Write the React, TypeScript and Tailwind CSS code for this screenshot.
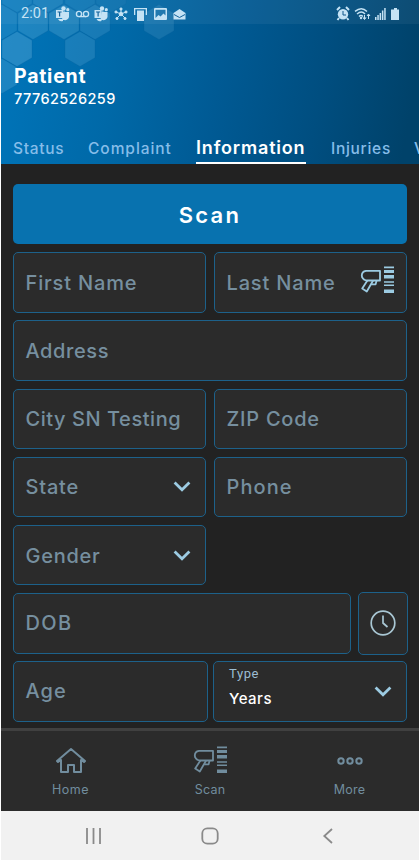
import type { ReactNode } from 'react';

function Scanner({ className }: { className?: string }) {
  return (
    <svg className={className} width="34" height="28" viewBox="0 0 34 28" fill="none" stroke="currentColor" strokeWidth="1.8" strokeLinejoin="round">
      <path d="M6 4.8H20v9.7H6.3C3 13.6 1.8 12 1.8 9.6S3.2 5.2 6 4.8Z" />
      <path d="M7.4 14.5 2.2 22.6l4.6 2.9 6.3-11M11.2 18.4h4.4l1-3.9" />
      <g fill="currentColor" stroke="none">
        <path d="M24 .6h10v1.6H24zM24 4h10v3H24zM24 9h10v3.6H24zM24 15.2h10v1.6H24zM24 18.4h10V20H24zM24 23.4h10V27H24z" />
      </g>
    </svg>
  );
}

function Chevron() {
  return (
    <svg width="18" height="12" viewBox="0 0 18 12" fill="none" stroke="#9ccbe2" strokeWidth="2.8">
      <path d="m1.6 1.6 7.4 7.2 7.4-7.2" />
    </svg>
  );
}

function Field({ children, className = 'w-[193px]' }: { children: ReactNode; className?: string }) {
  return (
    <div className={`flex h-[60.4px] shrink-0 items-center justify-between rounded-[5px] border border-[#1d618a] bg-[#2b2b2b] pl-[11.5px] pt-px text-[20px] font-medium text-[#768f9f] ${className}`}>
      {children}
    </div>
  );
}

// Hexagon centres and opacities
const hexes = [
  [17, -5, 0.1], [48, -5, 0.12], [80, -5, 0.08], [111, -5, 0.05],
  [2, 22, 0.12], [33, 22, 0.18], [64, 22, 0.18], [95, 22, 0.14], [159, 22, 0.12],
  [17, 49, 0.22], [80, 49, 0.15], [2, 76, 0.17],
];

function StatusBar() {
  return (
    <div className="flex h-6 items-center bg-white/5 pl-5 pt-1 text-[#c5e3f5]">
      <span className="w-[34px] font-[Roboto] text-[14.5px] leading-5 tracking-[0.1px]">2:01</span>
      <svg width="132" height="16" viewBox="0 0 132 16" fill="currentColor">
        <g id="teams">
          <path d="M1 4h7v8H1zM9 6h5v5a4 4 0 0 1-5 3zM3 13h5v2a4 4 0 0 1-5-2z" />
          <path d="M8 5.5h2v8.5H7z" />
          <circle cx="8.5" cy="2.5" r="2.2" /><circle cx="12.8" cy="3.7" r="1.6" />
          <path d="M2.6 6h4M4.6 6v4.4" stroke="#12629b" strokeWidth="1.2" />
        </g>
        <g fill="none" stroke="currentColor" strokeWidth="1.3"><circle cx="24" cy="8" r="2.6" /><circle cx="31" cy="8" r="2.6" /><path d="M24 10.6h7" /></g>
        <use href="#teams" x="38.5" />
        <g stroke="currentColor" strokeWidth="1"><path d="M66 8V3M66 8l5-2M66 8l4 4M66 8l-4 4M66 8l-5-2" />
          <circle cx="66" cy="8" r="1.8" /><circle cx="66" cy="3" r="1.1" /><circle cx="71" cy="6" r="1.1" /><circle cx="70" cy="12.5" r="1.1" /><circle cx="62" cy="12.5" r="1.1" /><circle cx="61" cy="6" r="1.1" /></g>
        <path d="M79 2h13v7h-1.3V3.3h-10.400V9H79zM82 4.500h7V15h-7z" />
        <path fillRule="evenodd" d="M100 2h11a1 1 0 0 1 1 1v10a1 1 0 0 1-1 1h-11a1 1 0 0 1-1-1V3a1 1 0 0 1 1-1Zm.5 1.800V12l3-3 2 1.500 3-3 2 2V3.800Z" />
        <path d="m118.500 7 6-4 6 4v6.500h-12z" /><path d="m119 8.500 5.500 3 5.500-3" stroke="#11629a" fill="none" />
      </svg>
      <svg className="ml-auto mr-[18px]" width="66" height="16" viewBox="0 0 66 16" fill="currentColor">
        <circle cx="8" cy="8.2" r="5.2" /><path d="m2 4 3-3M11 1l3 3M4 12l-1.500 2M12 12l1.500 2" stroke="currentColor" strokeWidth="2" /><path d="M8 5v4h3" fill="none" stroke="#11568a" />
        <g fill="none" stroke="currentColor" strokeWidth="1.4"><path d="M20 5.400q6.500-5.500 12 0M22 8q4.500-3.800 8 0M24 10.400q2-2 4 0" /></g>
        <circle cx="26" cy="12" r="1.2" /><path d="M29.500 9v4M28 11.500l1.500 2 1.500-2M33.500 13V9M32 10l1.500-2 1.500 2" stroke="currentColor" />
        <path d="M40 11h1.500v3H40zM42.300 9h1.500v5h-1.500zM44.600 7h1.500v7h-1.500zM46.900 4.500h1.500V14h-1.500zM49.200 2h1.500v12h-1.500z" />
        <path d="M59 2h3v1.500h2V14h-8V3.500h3z" />
      </svg>
    </div>
  );
}

export default function App() {
  return (
    <div className="h-[861px] w-[419px] overflow-hidden border-b border-l border-white bg-[#222] font-[Inter,sans-serif]">
      <header className="relative h-[164px] overflow-hidden bg-[linear-gradient(100deg,#0075ba_0%,#0069a8_28%,#005a94_52%,#004e80_75%,#00426a_96%)]">
        <svg className="absolute left-0 top-0" width="200" height="100">
          {hexes.map(([x, y, o], i) => (
            <path key={i} transform={`translate(${x - 1} ${y})`} d="m0-17.500 15 8.800V8.700L0 17.500l-15-8.800V-8.700Z" fill="#a9dcf5" fillOpacity={o} stroke="#075c94" strokeOpacity="0.2" />
          ))}
        </svg>
        <div className="relative">
          <StatusBar />
          <h1 className="mt-10 pl-[13px] text-[19.5px] font-bold leading-6 tracking-[0.75px] text-white">Patient</h1>
          <p className="pl-[13px] text-[14.5px] font-medium leading-[22px] tracking-[0.4px] text-white">77762526259</p>
          <nav className="mt-[25px] flex h-[29px] items-start whitespace-nowrap pl-3 text-[15.5px] font-medium leading-7 text-[#86bde9]">
            <span className="w-[75px] shrink-0 tracking-[0.7px]">Status</span>
            <span className="w-[108px] shrink-0 tracking-[0.95px]">Complaint</span>
            <span className="h-[29px] w-[110px] shrink-0 border-b-2 border-white text-[18px] font-semibold leading-[25px] tracking-[0.82px] text-white">Information</span>
            <span className="ml-[25px] w-[83px] shrink-0 tracking-[0.7px]">Injuries</span>
            <span className="shrink-0">Vitals</span>
          </nav>
        </div>
      </header>

      <main className="flex h-[564px] flex-col gap-[7.8px] pl-3 pt-5">
        <button className="h-[60.4px] w-[394px] shrink-0 rounded-[5px] bg-[#0872af] pt-0.5 text-[22px] font-semibold tracking-[2.3px] text-white">Scan</button>
        <div className="flex gap-2">
          <Field><span className="tracking-[0.85px]">First Name</span></Field>
          <Field><span className="tracking-[0.85px]">Last Name</span><Scanner className="mb-1.5 mr-3 text-[#9ccbe2]" /></Field>
        </div>
        <Field className="w-[394px]"><span className="tracking-[0.6px]">Address</span></Field>
        <div className="flex gap-2">
          <Field><span className="tracking-[0.55px]">City SN Testing</span></Field>
          <Field><span className="tracking-[0.75px]">ZIP Code</span></Field>
        </div>
        <div className="flex gap-2">
          <Field className="w-[193px] pr-[14px]"><span className="tracking-[0.8px]">State</span><Chevron /></Field>
          <Field><span className="tracking-[1.1px]">Phone</span></Field>
        </div>
        <Field className="w-[193px] pr-[14px]"><span className="tracking-[0.75px]">Gender</span><Chevron /></Field>
        <div className="flex h-[60.4px] items-center gap-[7px]">
          <Field className="w-[338px]"><span className="mb-0.5 tracking-[1.4px]">DOB</span></Field>
          <button className="flex h-[63px] w-[50px] items-center justify-center rounded-[5px] border border-[#1d618a] bg-[#2b2b2b]">
            <svg width="26" height="26" viewBox="0 0 26 26" fill="none" stroke="#a9c7d4" strokeWidth="1.7"><circle cx="13" cy="13" r="11.8" /><path d="M13 5.500V13l4.500 4" /></svg>
          </button>
        </div>
        <div className="flex gap-[5px]">
          <Field className="w-[195px]"><span className="mb-0.5 tracking-[1.1px]">Age</span></Field>
          <Field className="w-[194px] pr-[14px]">
            <span className="flex flex-col self-start pl-[3.5px] pt-0.5">
              <span className="font-[Roboto] text-[13px] font-normal leading-[18px] tracking-[0.6px] text-[#9cbdd2]">Type</span>
              <span className="mt-1.5 text-[15px] leading-5 tracking-[0.5px] text-white">Years</span>
            </span>
            <Chevron />
          </Field>
        </div>
      </main>

      <footer className="flex h-[83px] border-t-[3px] border-[#404040] bg-[#2b2b2b] text-[12.5px] text-[#718d9e]">
        <div className="flex w-[139px] flex-col items-center pt-[15px]">
          <svg width="30" height="28" viewBox="0 0 30 28" fill="none" stroke="currentColor" strokeWidth="2" strokeLinejoin="round"><path d="m1 15 14-12 14 12-1 1-3-2v12h-7v-7h-6v7H5V14l-3 2Z" /></svg>
          <span className="mt-1.5 leading-5 tracking-[0.45px]">Home</span>
        </div>
        <div className="flex w-[140px] flex-col items-center pt-[15px]"><Scanner /><span className="mt-1.5 leading-5 tracking-[0.2px]">Scan</span></div>
        <div className="flex w-[139px] flex-col items-center pt-[15px]">
          <svg width="28" height="28" viewBox="0 0 28 28" fill="none" stroke="currentColor" strokeWidth="2"><circle cx="5" cy="15" r="2.7" /><circle cx="14" cy="15" r="2.7" /><circle cx="23" cy="15" r="2.7" /></svg>
          <span className="mt-1.5 leading-5 tracking-[0.2px]">More</span>
        </div>
      </footer>
      <div className="flex h-[49px] items-center bg-[#f1f1f1] pl-[84px] text-[#8a8a8a]">
        <svg width="17" height="18" viewBox="0 0 17 18" stroke="currentColor" strokeWidth="1.8"><path d="M2 1v16M8.500 1v16M15 1v16" /></svg>
        <svg className="ml-[99px]" width="18" height="18" viewBox="0 0 18 18" fill="none" stroke="currentColor" strokeWidth="1.8"><rect x="1.3" y="1.3" width="15.4" height="15.4" rx="5" /></svg>
        <svg className="ml-[103px]" width="12" height="18" viewBox="0 0 12 18" fill="none" stroke="currentColor" strokeWidth="1.8"><path d="M10 2 2.300 9l7.700 7" /></svg>
      </div>
    </div>
  );
}
